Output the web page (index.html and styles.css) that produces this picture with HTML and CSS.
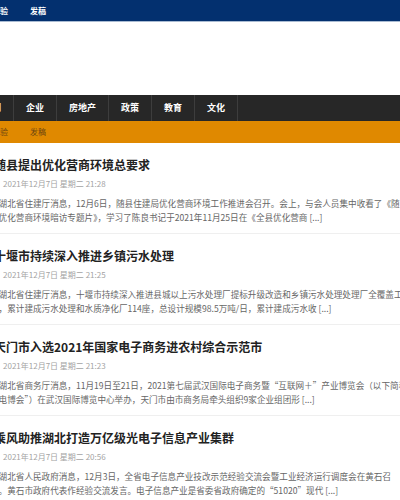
FILE: index.html
```html
<!doctype html>
<html>
  <head>
    <meta charset="utf-8">
    <title>湖北新闻</title>
    <meta name="viewport" content="width=device-width,minimum-scale=1,initial-scale=1">
    <link rel="stylesheet" href="styles.css">
  </head>
  <body>
    <div class="topbar">
      <ul class="toplinks">
        <li><a href="#">体验</a></li>
        <li><a href="#">发稿</a></li>
      </ul>
    </div>

    <header class="masthead"></header>

    <nav class="mainnav">
      <ul>
        <li><a href="#">新闻</a></li>
        <li><a href="#">企业</a></li>
        <li><a href="#">房地产</a></li>
        <li><a href="#">政策</a></li>
        <li><a href="#">教育</a></li>
        <li><a href="#">文化</a></li>
      </ul>
    </nav>

    <div class="subnav">
      <ul class="toplinks">
        <li><a href="#">体验</a></li>
        <li><a href="#">发稿</a></li>
      </ul>
    </div>

    <section class="posts">

      <article class="post">
        <h2><a href="#">随县提出优化营商环境总要求</a></h2>
        <div class="meta">
          <svg class="clock" viewBox="0 0 10 10"><circle cx="5" cy="5" r="4" fill="none" stroke="#aaa" stroke-width="1"/><path d="M5 2.5V5h2" fill="none" stroke="#aaa" stroke-width="1"/></svg>
          <span>2021年12月7日 星期二 21:28</span>
        </div>
        <p>据湖北省住建厅消息，12月6日，随县住建局优化营商环境工作推进会召开。会上，与会人员集中收看了《随<br>县优化营商环境暗访专题片》，学习了陈良书记于2021年11月25日在《全县优化营商 <a href="#">[...]</a></p>
      </article>

      <article class="post">
        <h2><a href="#">十堰市持续深入推进乡镇污水处理</a></h2>
        <div class="meta">
          <svg class="clock" viewBox="0 0 10 10"><circle cx="5" cy="5" r="4" fill="none" stroke="#aaa" stroke-width="1"/><path d="M5 2.5V5h2" fill="none" stroke="#aaa" stroke-width="1"/></svg>
          <span>2021年12月7日 星期二 21:25</span>
        </div>
        <p>据湖北省住建厅消息，十堰市持续深入推进县城以上污水处理厂提标升级改造和乡镇污水处理处理厂全覆盖工<br>程，累计建成污水处理和水质净化厂114座，总设计规模98.5万吨/日，累计建成污水收 <a href="#">[...]</a></p>
      </article>

      <article class="post">
        <h2><a href="#">天门市入选2021年国家电子商务进农村综合示范市</a></h2>
        <div class="meta">
          <svg class="clock" viewBox="0 0 10 10"><circle cx="5" cy="5" r="4" fill="none" stroke="#aaa" stroke-width="1"/><path d="M5 2.5V5h2" fill="none" stroke="#aaa" stroke-width="1"/></svg>
          <span>2021年12月7日 星期二 21:23</span>
        </div>
        <p>据湖北省商务厅消息，11月19日至21日，2021第七届武汉国际电子商务暨“互联网＋”产业博览会（以下简称<br>“电博会”）在武汉国际博览中心举办，天门市由市商务局牵头组织9家企业组团形 <a href="#">[...]</a></p>
      </article>

      <article class="post">
        <h2><a href="#">乘风助推湖北打造万亿级光电子信息产业集群</a></h2>
        <div class="meta">
          <svg class="clock" viewBox="0 0 10 10"><circle cx="5" cy="5" r="4" fill="none" stroke="#aaa" stroke-width="1"/><path d="M5 2.5V5h2" fill="none" stroke="#aaa" stroke-width="1"/></svg>
          <span>2021年12月7日 星期二 20:56</span>
        </div>
        <p>据湖北省人民政府消息，12月3日，全省电子信息产业技改示范经验交流会暨工业经济运行调度会在黄石召<br>开。黄石市政府代表作经验交流发言。电子信息产业是省委省政府确定的“51020”现代 <a href="#">[...]</a></p>
      </article>

    </section>
  </body>
</html>
```

FILE: styles.css
```css
html, body {
  overflow: hidden;
}

body {
  margin: 0;
  background: #fff;
  font-family: "Noto Sans CJK SC", "Microsoft YaHei", sans-serif;
}

ul {
  margin: 0;
  padding: 0;
  list-style: none;
}

a {
  color: inherit;
  text-decoration: none;
}

/* top strip */
.topbar {
  height: 21px;
  background: #03306f;
  border-bottom: 1px solid #a9bbd2;
  color: #fff;
}

.toplinks {
  display: flex;
  margin-left: -19px;
}

.toplinks a {
  display: block;
  padding: 0 11px;
  font-size: 8px;
  line-height: 21px;
}

.topbar .toplinks a {
  font-weight: bold;
}

.masthead {
  height: 73px;
}

/* main menu */
.mainnav {
  height: 26px;
  background: #272727;
}

.mainnav ul {
  display: flex;
  margin-left: -29px;
}

.mainnav li {
  border-right: 1px solid #3d3d3d;
}

.mainnav a {
  display: block;
  padding: 0 12px;
  font-size: 9px;
  font-weight: bold;
  line-height: 26px;
  color: #fff;
}

.subnav {
  height: 22px;
  background: #e08900;
  color: #6b4510;
}

.subnav .toplinks a {
  line-height: 22px;
}

/* posts */
.posts {
  margin-left: -10px;
}

.post {
  padding: 14px 0 9px;
  border-bottom: 1px solid #efefef;
}

.post h2 {
  margin: 0;
  padding-left: 4px;
  font-size: 12px;
  line-height: 16px;
  color: #222;
  white-space: nowrap;
}

.meta {
  display: flex;
  align-items: center;
  gap: 4px;
  margin-top: 4px;
  height: 12px;
  font-size: 8px;
  color: #a3a3a3;
}

.clock {
  width: 9px;
  height: 9px;
}

.post p {
  margin: 7px 0 0;
  font-size: 8.6px;
  line-height: 14px;
  color: #666;
  white-space: nowrap;
}
```
